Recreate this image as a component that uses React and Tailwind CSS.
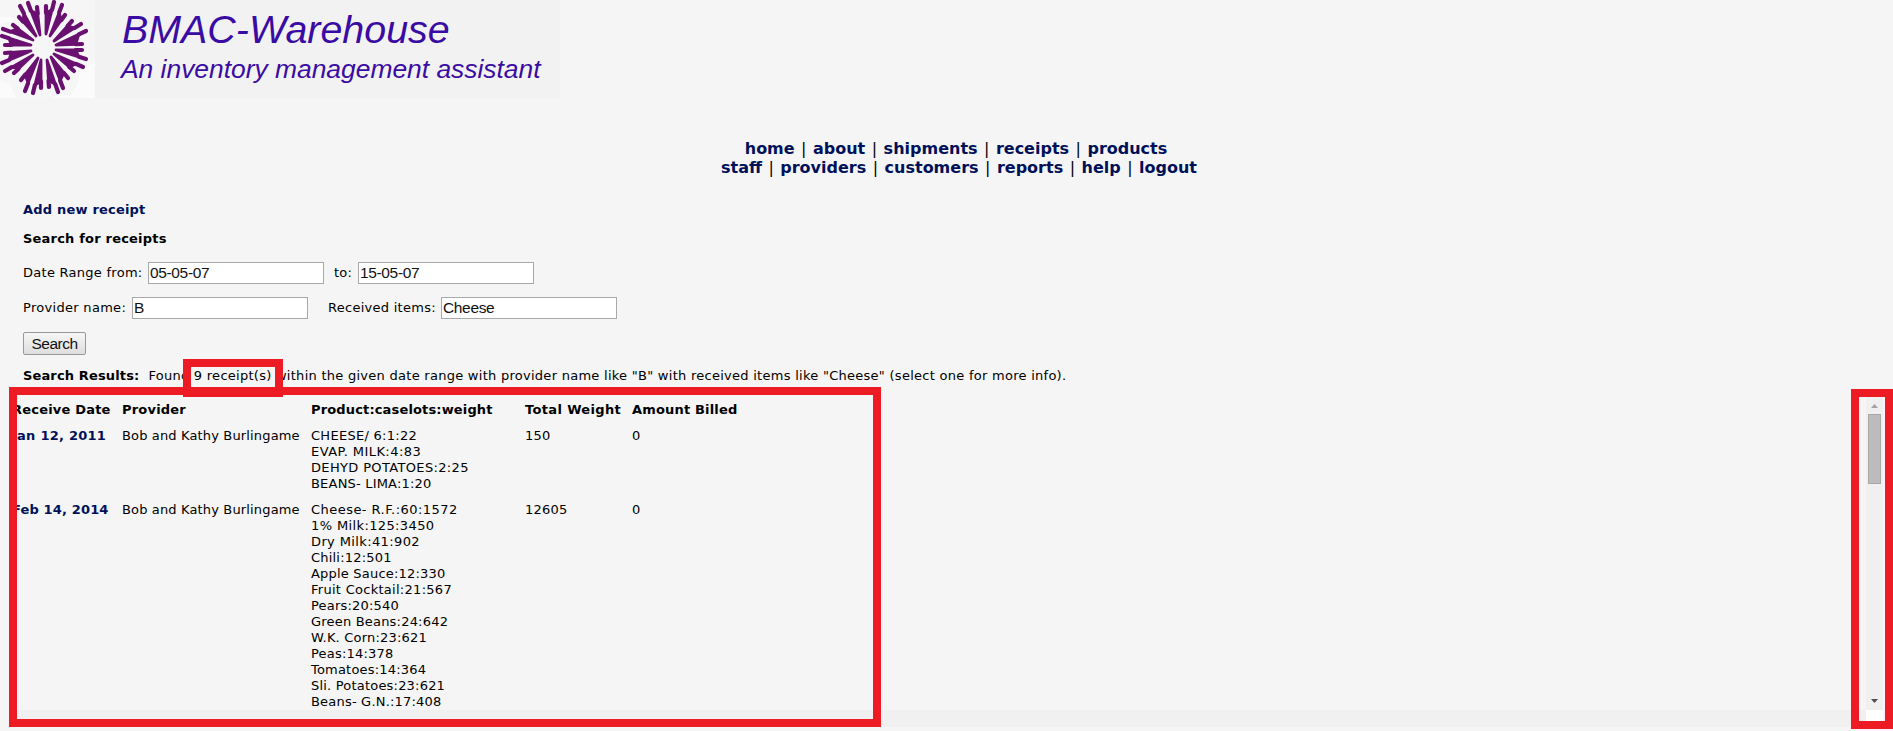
// Each wedge: two outer tips and the inner point where they join.
const wedges = [
  [[28, 3], [37, 7], [40, 35]],
  [[20, 6], [19, 17], [36, 36]],
  [[13, 25], [3, 29], [33, 40]],
  [[2, 36], [5, 45], [31, 45]],
  [[5, 53], [2, 63], [31, 51]],
  [[5, 71], [14, 73], [33, 55]],
  [[21, 80], [25, 91], [38, 58]],
  [[33, 93], [41, 88], [41, 60]],
  [[49, 87], [58, 92], [47, 60]],
  [[63, 88], [68, 78], [51, 57]],
  [[74, 71], [83, 67], [54, 54]],
  [[86, 59], [82, 50], [56, 50]],
  [[82, 44], [86, 31], [56, 45]],
  [[81, 24], [72, 21], [54, 41]],
  [[65, 15], [62, 5], [50, 36]],
  [[54, 2], [46, 6], [46, 34]],
];

const columns = [
  ["Receive Date", "tracking-[0.2px]"],
  ["Provider", "tracking-[0.2px]"],
  ["Product:caselots:weight", "tracking-[0.15px]"],
  ["Total Weight", "tracking-[0.35px]"],
  ["Amount Billed", "tracking-[0.17px]"],
];

const receipts = [
  {
    date: "Jan 12, 2011",
    dateTracking: "tracking-[0.25px]",
    provider: "Bob and Kathy Burlingame",
    items: [
      ["CHEESE/ 6:1:22", "tracking-[0.28px]"],
      ["EVAP. MILK:4:83", "tracking-[0.43px]"],
      ["DEHYD POTATOES:2:25", "tracking-[0.35px]"],
      ["BEANS- LIMA:1:20", "tracking-[0.2px]"],
    ],
    weight: "150",
    billed: "0",
  },
  {
    date: "Feb 14, 2014",
    dateTracking: "tracking-[0.15px]",
    provider: "Bob and Kathy Burlingame",
    items: [
      ["Cheese- R.F.:60:1572", "tracking-[0.46px]"],
      ["1% Milk:125:3450", "tracking-[0.38px]"],
      ["Dry Milk:41:902", "tracking-[0.38px]"],
      ["Chili:12:501"],
      ["Apple Sauce:12:330"],
      ["Fruit Cocktail:21:567", "tracking-[0.28px]"],
      ["Pears:20:540"],
      ["Green Beans:24:642"],
      ["W.K. Corn:23:621"],
      ["Peas:14:378"],
      ["Tomatoes:14:364"],
      ["Sli. Potatoes:23:621"],
      ["Beans- G.N.:17:408"],
    ],
    weight: "12605",
    billed: "0",
  },
];

function Logo() {
  return (
    <svg width="95" height="98" viewBox="0 0 95 98" className="shrink-0 bg-[#f6f6f6]">
      <path d="M0 17H14V22H6L0 25ZM80 70L95 62V98H52L60 94L70 96L78 84ZM0 80L10 84L16 98H0Z" fill="#fbfbfb" />
      {wedges.map(([a, b, c], i) => {
        const mid = (p) => [c[0] + (p[0] - c[0]) * 0.76, c[1] + (p[1] - c[1]) * 0.76].join(" ");
        return (
          <g key={i} fill="#6a1070" stroke="#6a1070" strokeLinecap="round" strokeLinejoin="round">
            <path d={`M${a.join(" ")}L${mid(a)}M${b.join(" ")}L${mid(b)}`} fill="none" strokeWidth="4.2" />
            <path d={`M${c.join(" ")}L${mid(a)}L${mid(b)}Z`} strokeWidth="2.8" />
          </g>
        );
      })}
    </svg>
  );
}

function NavRow({ items }) {
  return (
    <div className="whitespace-pre">
      {items.map((item, i) => (
        <span key={item}>
          {i > 0 && <span className="px-[1.4px] font-normal text-black"> | </span>}
          <a className="text-[#00115a]">{item}</a>
        </span>
      ))}
    </div>
  );
}

function Field({ label, value, className }) {
  return (
    <label className="flex items-center">
      <span className={className}>{label}</span>
      <input
        readOnly
        value={value}
        className="h-[22px] w-[176px] border border-[#a9a9a9] bg-white px-px font-['Liberation_Sans',sans-serif] text-[15.5px] leading-5 tracking-[-0.35px] text-[#111]"
      />
    </label>
  );
}

export default function App() {
  return (
    <div className="relative flex h-[731px] w-full flex-col overflow-hidden bg-[#f5f5f5] font-['DejaVu_Sans',sans-serif] text-[13px] leading-4 tracking-[0.2px] text-black">
      <header className="flex h-[98px] w-[560px] shrink-0 bg-[#f2f2f2] font-['Liberation_Sans',sans-serif] tracking-normal text-[#3a0ca3] italic">
        <Logo />
        <div className="pt-[7px] pl-[26px] whitespace-nowrap">
          <h1 className="pl-px text-[39.4px] leading-[45px]">BMAC-Warehouse</h1>
          <p className="text-[26.4px] leading-[34px]">An inventory management assistant</p>
        </div>
      </header>

      <nav className="mt-[41px] flex flex-col items-center pl-[25px] text-base leading-[19px] font-bold tracking-normal">
        <div className="mr-1.5">
          <NavRow items={["home", "about", "shipments", "receipts", "products"]} />
        </div>
        <NavRow items={["staff", "providers", "customers", "reports", "help", "logout"]} />
      </nav>

      <main className="mt-[25px] flex flex-col items-start pl-[23px] whitespace-nowrap">
        <a className="font-bold text-[#00115a]">Add new receipt</a>
        <h2 className="mt-[13px] font-bold">Search for receipts</h2>
        <div className="mt-[15px] flex">
          <Field label="Date Range from:" value="05-05-07" className="w-[125px] tracking-[0.27px]" />
          <Field label="to:" value="15-05-07" className="w-[34px] pl-2.5" />
        </div>
        <div className="mt-[13px] flex">
          <Field label="Provider name:" value="B" className="w-[109px] tracking-[0.3px]" />
          <Field label="Received items:" value="Cheese" className="w-[133px] pl-5 tracking-[0.27px]" />
        </div>
        <button className="mt-[13px] h-[23px] w-[63px] rounded-[2px] border border-[#999] bg-linear-to-b from-[#f6f6f6] to-[#dedede] font-['Liberation_Sans',sans-serif] text-[15.5px] leading-5 tracking-[-0.5px] text-[#111]">
          Search
        </button>
        <p className="mt-[13px]">
          <b className="tracking-[0.14px]">Search Results:</b>
          <span className="pl-[9px] tracking-[0.27px]">
            Found 9 receipt(s) within the given date range with provider name like "B" with received items like "Cheese" (select one for more info).
          </span>
        </p>
      </main>

      <section className="mt-[18px] grid grid-cols-[110px_189px_214px_107px_200px] gap-y-2.5 pl-3 whitespace-nowrap">
        {columns.map(([column, tracking]) => (
          <b key={column} className={tracking}>{column}</b>
        ))}
        {receipts.map((receipt) => [
          <a key={receipt.date} className={`font-bold text-[#00115a] ${receipt.dateTracking}`}>{receipt.date}</a>,
          <span key={receipt.date + "p"} className="tracking-[0.15px]">{receipt.provider}</span>,
          <div key={receipt.date + "i"}>
            {receipt.items.map(([item, tracking]) => (
              <div key={item} className={tracking}>{item}</div>
            ))}
          </div>,
          <span key={receipt.date + "w"}>{receipt.weight}</span>,
          <span key={receipt.date + "b"}>{receipt.billed}</span>,
        ])}
      </section>

      <div className="absolute top-[710px] left-[9px] h-[17px] w-[1857px] bg-[#f0f0f0]" />
      <div className="absolute top-[397px] left-[1866px] flex h-[313px] w-[17px] flex-col items-center bg-[#f0f0f0]">
        <svg width="7" height="4" className="mt-[7px]">
          <path d="M3.5 0L7 4H0Z" fill="#a3a3a3" />
        </svg>
        <div className="mt-[6px] h-[70px] w-[13px] border border-[#a8a8a8] bg-[#bcbcbc]" />
        <svg width="7" height="4" className="mt-auto mb-[7px]">
          <path d="M0 0H7L3.5 4Z" fill="#505050" />
        </svg>
      </div>
      <div className="absolute top-[710px] left-[1866px] h-[11px] w-[17px] bg-white" />
      <div className="absolute top-[359px] left-[183px] h-[38px] w-[100px] border-8 border-[#ed1c24]" />
      <div className="absolute top-[387px] left-[9px] h-[340px] w-[872px] border-8 border-[#ed1c24]" />
      <div className="absolute top-[389px] left-[1851px] h-[340px] w-[42px] border-8 border-[#ed1c24]" />
    </div>
  );
}
